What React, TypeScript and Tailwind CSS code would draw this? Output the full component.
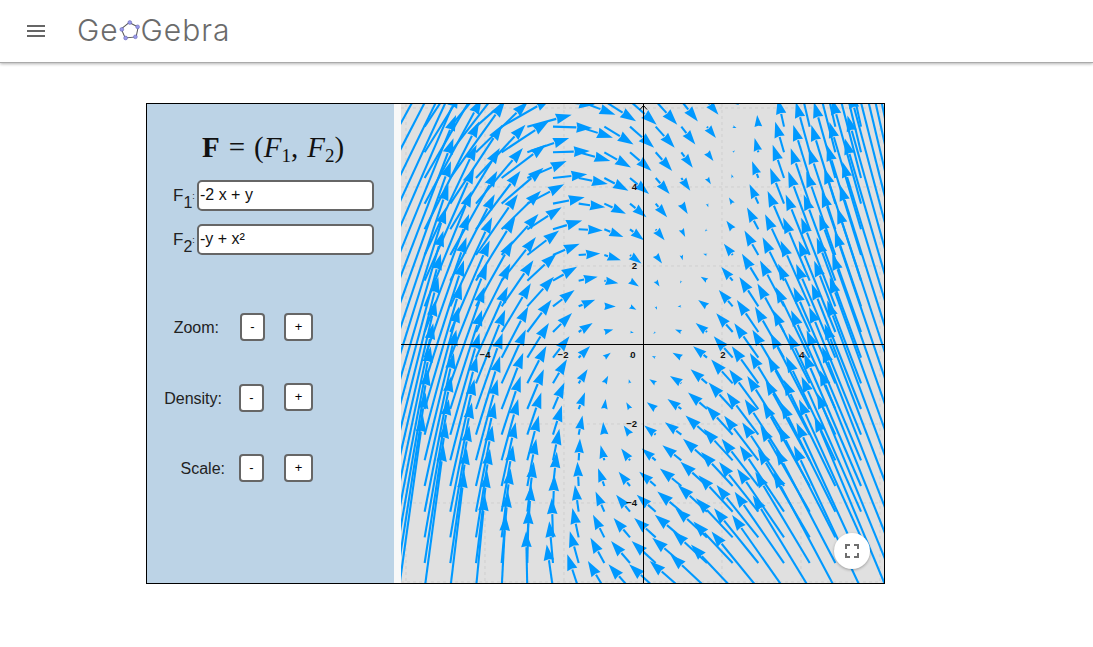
import React from "react";

// plot is drawn in local coords, svg origin sits at (401,104) on the page
const PLOT_W = 483;
const PLOT_H = 479;
const ORIGIN_X = 242;
const ORIGIN_Y = 241;
const UNIT = 39.5;
const STEP = 25.67;
const SCALE = 3.9;

type Arrow = { x: number; y: number; head: string; neck: [number, number] };

const buildArrows = () => {
  const out: Arrow[] = [];
  for (let i = -9; i <= 10; i++) {
    for (let j = -9; j <= 10; j++) {
      const px = ORIGIN_X - 13 + i * STEP;
      const py = ORIGIN_Y - 13 + j * STEP;
      const x = (px - ORIGIN_X) / UNIT;
      const y = (ORIGIN_Y - py) / UNIT;
      const dx = (-2 * x + y) * SCALE;
      const dy = -(-y + x * x) * SCALE;
      const len = Math.max(Math.hypot(dx, dy), 0.01);
      const ux = dx / len;
      const uy = dy / len;
      const shown = Math.max(len, 3);
      const hl = Math.min(shown, 16, 10 + shown * 0.2);
      const hw = hl * 0.33;
      const x2 = px + ux * shown;
      const y2 = py + uy * shown;
      const nx = x2 - ux * hl;
      const ny = y2 - uy * hl;
      const head = `${x2},${y2} ${nx - uy * hw},${ny + ux * hw} ${nx + ux},${ny + uy} ${nx + uy * hw},${ny - ux * hw}`;
      out.push({ x: px, y: py, head, neck: [nx, ny] });
    }
  }
  return out;
};

const arrows = buildArrows();

const xLabels = [
  { t: "−4", x: 84 },
  { t: "−2", x: 162 },
  { t: "2", x: 322 },
  { t: "4", x: 401 },
];
const yLabels = [
  { t: "4", y: 86 },
  { t: "2", y: 165 },
  { t: "−2", y: 323 },
  { t: "−4", y: 402 },
];

const Plot = () => (
  <svg width={PLOT_W} height={PLOT_H} className="block">
    <rect width={PLOT_W} height={PLOT_H} fill="#e0e0e0" />
    {[-6, -4, -2, 2, 4, 6].map((v) => (
      <line key={v} x1={ORIGIN_X + v * UNIT} x2={ORIGIN_X + v * UNIT} y1={0} y2={PLOT_H} stroke="#cfcfcf" strokeDasharray="3 3" />
    ))}
    {[-6, -4, -2, 2, 4, 6].map((v) => (
      <line key={v} y1={ORIGIN_Y + v * UNIT} y2={ORIGIN_Y + v * UNIT} x1={0} x2={PLOT_W} stroke="#cfcfcf" strokeDasharray="3 3" />
    ))}
    {arrows.map((a, i) => (
      <g key={i}>
        <line x1={a.x} y1={a.y} x2={a.neck[0]} y2={a.neck[1]} stroke="#0099ff" strokeWidth={2.1} />
        <polygon points={a.head} fill="#0099ff" />
      </g>
    ))}
    <line x1={0} x2={PLOT_W} y1={240.5} y2={240.5} stroke="#000" strokeWidth={1} />
    <line x1={242.5} x2={242.5} y1={0} y2={PLOT_H} stroke="#000" strokeWidth={1} />
    <path d="M239 5.5 L242.5 1.5 L246 5.5" fill="none" stroke="#000" strokeWidth={1} />
    <g fontFamily="'Liberation Sans', sans-serif" fontSize="9.5" fontWeight="700" fill="#111">
      {xLabels.map((l) => (
        <text key={l.t} x={l.x} y={254} textAnchor="middle">
          {l.t}
        </text>
      ))}
      <text x={232} y={254} textAnchor="middle">0</text>
      {yLabels.map((l) => (
        <text key={l.t} x={236} y={l.y} textAnchor="end">
          {l.t}
        </text>
      ))}
    </g>
  </svg>
);

const LogoMark = () => (
  <svg width="22" height="22" viewBox="0 0 22 22" className="mt-[3px]">
    <path d="M11 2.5 L19.5 8 L16.5 17.5 L5.5 17.5 L2.5 8 Z" fill="none" stroke="#555" strokeWidth="1" transform="rotate(-6 11 11)" />
    {[
      [10.8, 2.5],
      [18.6, 6.8],
      [16.4, 16.8],
      [6.6, 18],
      [2.8, 9.4],
    ].map(([cx, cy]) => (
      <circle key={cx} cx={cx} cy={cy} r="1.9" fill="#9a9ae8" stroke="#5a5ab0" strokeWidth="0.5" />
    ))}
  </svg>
);

const Btn = ({ label, className }: { label: string; className: string }) => (
  <button className={`bg-white border-2 border-[#666] rounded-[4px] text-[13px] text-black flex items-center justify-center ${className}`}>
    {label}
  </button>
);

const Field = ({ n, value }: { n: number; value: string }) => (
  <div className="flex items-center h-[30px]">
    <span className="w-[50px] pl-[26px] text-[17px] text-[#222] whitespace-nowrap leading-none">
      F<sub className="text-[16px] bottom-[-7px]">{n}</sub>
      <span className="text-[9px] align-middle">:</span>
    </span>
    <input
      readOnly
      value={value}
      className="w-[177px] h-[31px] bg-white border-2 border-[#666] rounded-[5px] px-[1px] text-[16px] text-[#111] outline-none"
    />
  </div>
);

export default function App() {
  return (
    <div className="min-h-[647px] bg-white font-['Liberation_Sans',sans-serif]">
      <header className="h-[63px] flex items-center bg-white border-b border-[#aaa] shadow-[0_1px_3px_rgba(0,0,0,0.3)]">
        <svg width="24" height="24" viewBox="0 0 24 24" className="ml-6" fill="#666">
          <path d="M3 18h18v-2H3v2zm0-5h18v-2H3v2zm0-7v2h18V6H3z" />
        </svg>
        <div className="ml-[29px] -mt-[3px] flex items-center text-[#6b6b6b] text-[30px] font-['Inter',sans-serif] font-light leading-none">
          <span className="tracking-[0.9px]">Ge</span>
          <LogoMark />
          <span className="tracking-[1px]">Gebra</span>
        </div>
      </header>

      <div className="relative ml-[146px] mt-[40px] w-[739px] h-[481px] border border-black flex">
        <div className="w-[247px] bg-[#bcd3e6] text-[#222]">
          <div className="h-[76px] pt-[22px] pl-[5px] text-center text-[29px] leading-[42px] text-[#111] font-['Liberation_Serif',serif] whitespace-nowrap">
            <b>F</b>
            <span className="mx-[9px]">=</span>(<i>F</i>
            <sub className="text-[19px]">1</sub>,<span className="ml-[9px]" />
            <i>F</i>
            <sub className="text-[19px]">2</sub>)
          </div>
          <div className="flex flex-col gap-[14px]">
            <Field n={1} value="-2 x + y" />
            <Field n={2} value="-y + x²" />
          </div>
          <div className="mt-[59px] flex items-center h-[28px] text-[16px]">
            <span className="w-[72px] text-right mt-[1px]">Zoom:</span>
            <Btn label="-" className="ml-[21px] w-[25px] h-[28px]" />
            <Btn label="+" className="ml-[19px] w-[29px] h-[28px] -mt-[1px]" />
          </div>
          <div className="mt-[43px] flex items-center h-[28px] text-[16px]">
            <span className="w-[75px] text-right mt-[1px]">Density:</span>
            <Btn label="-" className="ml-[17px] w-[25px] h-[28px]" />
            <Btn label="+" className="ml-[20px] w-[29px] h-[28px] -mt-[2px]" />
          </div>
          <div className="mt-[42px] flex items-center h-[28px] text-[16px]">
            <span className="w-[78px] text-right mt-[2px]">Scale:</span>
            <Btn label="-" className="ml-[14px] w-[25px] h-[28px]" />
            <Btn label="+" className="ml-[20px] w-[29px] h-[28px]" />
          </div>
        </div>
        <div className="w-[7px] bg-[#f8f8f8]" />
        <Plot />
        <button className="absolute left-[687px] top-[429px] w-9 h-9 rounded-full bg-white shadow-[0_1px_3px_rgba(0,0,0,0.3)] flex items-center justify-center">
          <svg width="16" height="16" viewBox="0 0 16 16" fill="none" stroke="#6f6f6f" strokeWidth="2">
            <path d="M2 6V2h4M10 2h4v4M14 10v4h-4M6 14H2v-4" />
          </svg>
        </button>
      </div>
    </div>
  );
}
